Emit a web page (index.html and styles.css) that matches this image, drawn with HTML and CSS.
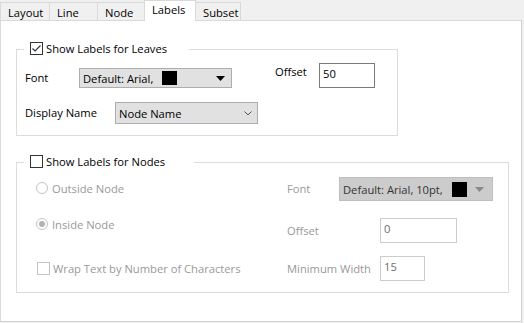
FILE: index.html
```html
<!DOCTYPE html>
<html lang="en">

<head>
    <meta charset="UTF-8">
    <meta name="viewport" content="width=device-width, initial-scale=1.0">
    <title>Labels</title>
    <link rel="stylesheet" href="styles.css">
</head>

<body>
    <div class="dialog">
        <div class="tabs">
            <div class="tab tab-layout">Layout</div>
            <div class="tab tab-line">Line</div>
            <div class="tab tab-node">Node</div>
            <div class="tab tab-labels active">Labels</div>
            <div class="tab tab-subset">Subset</div>
        </div>
        <div class="panel">
            <fieldset class="group group-leaves">
                <legend>
                    <span class="check">
                        <svg width="11" height="11" viewBox="0 0 11 11"><polyline points="1.5,5.5 4,8 9.5,2.5" fill="none" stroke="#333" stroke-width="1.2"/></svg>
                    </span>Show Labels for Leaves
                </legend>
                <div class="row row-font">
                    <span class="lbl lbl-font">Font</span>
                    <div class="combo combo-font">
                        <span class="combo-text">Default: Arial,</span>
                        <span class="swatch"></span>
                        <svg class="drop" width="9" height="5" viewBox="0 0 9 5"><polygon points="0,0 9,0 4.5,5" fill="#000"/></svg>
                    </div>
                    <span class="lbl lbl-offset">Offset</span>
                    <div class="input input-offset">50</div>
                </div>
                <div class="row row-display">
                    <span class="lbl lbl-display">Display Name</span>
                    <div class="combo combo-name">
                        <span>Node Name</span>
                        <svg class="chevron" width="8" height="5" viewBox="0 0 8 5"><polyline points="0.5,0.5 4,4 7.5,0.5" fill="none" stroke="#555" stroke-width="1"/></svg>
                    </div>
                </div>
            </fieldset>

            <fieldset class="group group-nodes">
                <legend class="legend-nodes">
                    <span class="check"></span>Show Labels for Nodes
                </legend>
                <div class="cols">
                    <div class="col-left">
                        <div class="opt opt-outside"><span class="radio"></span>Outside Node</div>
                        <div class="opt opt-inside"><span class="radio on"></span>Inside Node</div>
                        <div class="opt opt-wrap"><span class="check off"></span>Wrap Text by Number of Characters</div>
                    </div>
                    <div class="col-right">
                        <div class="row row-font2">
                            <span class="lbl off lbl-font2">Font</span>
                            <div class="combo combo-off">
                                <span class="combo-text2">Default: Arial, 10pt,</span>
                                <span class="swatch swatch-off"></span>
                                <svg class="drop drop-off" width="9" height="5" viewBox="0 0 9 5"><polygon points="0,0 9,0 4.5,5" fill="#8a8a8a"/></svg>
                            </div>
                        </div>
                        <div class="row row-offset2">
                            <span class="lbl off lbl-wide">Offset</span>
                            <div class="input input-off input-offset2">0</div>
                        </div>
                        <div class="row row-minw">
                            <span class="lbl off lbl-wide">Minimum Width</span>
                            <div class="input input-off input-minw">15</div>
                        </div>
                    </div>
                </div>
            </fieldset>
        </div>
    </div>
</body>

</html>
```

FILE: styles.css
```css
* {
    margin: 0;
    padding: 0;
}

body {
    background-color: #f0f0f0;
    font-family: "Open Sans", "Noto Sans", sans-serif;
    font-size: 11.2px;
    color: #000;
}

.dialog {
    width: 522px;
}

/* tab strip */
.tabs {
    position: relative;
    z-index: 1;
    display: flex;
    align-items: flex-end;
    height: 20px;
}

.tab {
    box-sizing: border-box;
    height: 18px;
    margin-left: -1px;
    padding: 2px 0 0 7px;
    line-height: 15px;
    border: 1px solid #d9d9d9;
    border-bottom: none;
    background-color: #f0f0f0;
}

.tab-layout {
    width: 50px;
    margin-left: 0;
}

.tab-line {
    width: 49px;
}

.tab-node {
    width: 48px;
}

.tab-labels {
    width: 52px;
}

.tab-subset {
    width: 46px;
}

.tab.active {
    height: 21px;
    margin-bottom: -1px;
    padding-top: 1px;
    background-color: #fff;
}

/* page */
.panel {
    box-sizing: border-box;
    width: 522px;
    height: 302px;
    padding: 21px 0 0 15px;
    border: 1px solid #d9d9d9;
    border-right-color: #d0d0d0;
    border-bottom-color: #d0d0d0;
    background-color: #fff;
}

.group {
    box-sizing: border-box;
    padding: 0 0 11px 0;
    border: 1px solid #dcdcdc;
}

.group-leaves {
    width: 382px;
}

.group-nodes {
    width: 493px;
    margin-top: 19px;
}

legend {
    height: 14px;
    margin-left: 7px;
    padding: 0 22px 0 6px;
    line-height: 14px;
    white-space: nowrap;
}

.legend-nodes {
    padding-right: 29px;
}

.check {
    display: inline-block;
    box-sizing: border-box;
    width: 13px;
    height: 13px;
    margin-right: 3px;
    vertical-align: top;
    border: 1px solid #333;
    background-color: #fff;
}

.check svg {
    display: block;
}

.check.off {
    border-color: #c4c4c4;
    margin-right: 3px;
}

.row {
    display: flex;
    align-items: flex-start;
}

.group-leaves .row {
    padding-left: 8px;
}

.row-font {
    margin-top: 7px;
}

.row-display {
    margin-top: 14px;
}

.lbl {
    white-space: nowrap;
}

.lbl.off {
    color: #999;
}

.lbl-font {
    width: 54px;
    margin-top: 5px;
    line-height: 20px;
}

.lbl-offset {
    width: 44px;
    margin: 1px 0 0 43px;
    line-height: 16px;
}

.lbl-display {
    width: 90px;
    line-height: 22px;
}

/* combos */
.combo {
    box-sizing: border-box;
    display: flex;
    align-items: center;
    padding-left: 3px;
    border: 1px solid #adadad;
    background-color: #e1e1e1;
    white-space: nowrap;
}

.combo-font {
    width: 153px;
    height: 20px;
    margin-top: 5px;
}

.combo-text {
    width: 79px;
}

.swatch {
    width: 15px;
    height: 14px;
    background-color: #000;
}

.drop {
    display: block;
    margin: 0 6px 0 auto;
}

.combo-name {
    justify-content: space-between;
    width: 143px;
    height: 22px;
}

.chevron {
    display: block;
    margin-right: 5px;
}

.combo-off {
    width: 154px;
    height: 24px;
    border-color: #bfbfbf;
    background-color: #ccc;
    color: #333;
}

.combo-text2 {
    width: 109px;
}

.swatch-off {
    height: 15px;
}

.drop-off {
    margin-right: 8px;
}

/* text boxes */
.input {
    box-sizing: border-box;
    height: 25px;
    padding: 2px 0 0 3px;
    line-height: 16px;
    border: 1px solid #7a7a7a;
    background-color: #fff;
}

.input-offset {
    width: 56px;
}

.input-off {
    border-color: #ccc;
    color: #6d6d6d;
}

.input-offset2 {
    width: 77px;
}

.input-minw {
    width: 45px;
}

/* disabled group */
.cols {
    display: flex;
}

.col-left {
    box-sizing: border-box;
    width: 270px;
    padding-left: 19px;
}

.opt {
    display: flex;
    align-items: center;
    height: 16px;
    color: #999;
    white-space: nowrap;
}

.opt-outside {
    margin-top: 11px;
}

.opt-inside {
    margin-top: 20px;
}

.opt-wrap {
    margin-top: 28px;
    padding-left: 1px;
}

.radio {
    position: relative;
    box-sizing: border-box;
    width: 12px;
    height: 12px;
    margin-right: 4px;
    border: 1px solid #c4c4c4;
    border-radius: 50%;
    background-color: #fff;
}

.radio.on::after {
    content: "";
    position: absolute;
    top: 2px;
    left: 2px;
    width: 6px;
    height: 6px;
    border-radius: 50%;
    background-color: #b3b3b3;
}

.col-right {
    display: flex;
    flex-direction: column;
}

.row-font2 {
    margin-top: 8px;
}

.lbl-font2 {
    width: 52px;
    line-height: 24px;
}

.row-offset2 {
    margin-top: 17px;
}

.row-minw {
    margin-top: 13px;
}

.lbl-wide {
    width: 93px;
    line-height: 25px;
}
```
